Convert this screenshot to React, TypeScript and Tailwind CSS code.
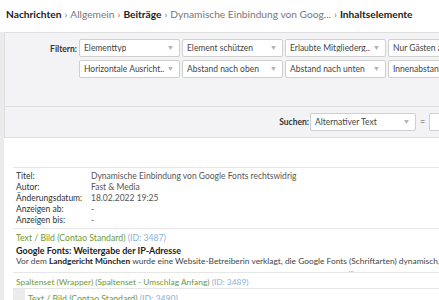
import React from "react";

const font = { fontFamily: 'Lato, "Open Sans", sans-serif' };

function Sel({ label, w = "w-[101px]" }: { label: string; w?: string }) {
  return (
    <div className={`${w} h-[18px] shrink-0 bg-white border border-[#cfcfcf] rounded-[2px] flex items-center justify-between pl-[4px] pr-[6px]`}>
      <span className="text-[8.5px] text-[#444] whitespace-nowrap overflow-hidden leading-none">{label}</span>
      <svg width="5" height="4" viewBox="0 0 6 5" className="shrink-0 ml-1">
        <path d="M0 0 H6 L3 5 Z" fill="#b5b5b5" />
      </svg>
    </div>
  );
}

export default function App() {
  return (
    <div className="w-[439px] h-[300px] overflow-hidden bg-white relative" style={font}>
      <div className="w-[560px]">
        <div className="h-[32px] flex items-center pl-[6px] pb-[2px] text-[10.2px] text-[#777] whitespace-nowrap">
          <span className="font-bold text-[#222]">Nachrichten</span>
          <span className="mx-[3px]">›</span>
          <span>Allgemein</span>
          <span className="mx-[3px]">›</span>
          <span className="font-bold text-[#222]">Beiträge</span>
          <span className="mx-[3px]">›</span>
          <span>Dynamische Einbindung von Goog...</span>
          <span className="mx-[3px]">›</span>
          <span className="font-bold text-[#222]">Inhaltselemente</span>
        </div>
        <div className="flex">
          <div className="w-[4px] bg-[#ebebeb] shrink-0" />
          <div className="flex-1">
            <div className="bg-[#f3f3f5] border-t border-l border-[#dedede] h-[74px] pt-[6px] flex">
              <div className="w-[73px] text-right pr-[1px] pt-[4px] text-[8.5px] font-bold text-[#333]">Filtern:</div>
              <div className="flex flex-col gap-[3px] pl-[1px]">
                <div className="flex gap-[2px]">
                  <Sel label="Elementtyp" />
                  <Sel label="Element schützen" />
                  <Sel label="Erlaubte Mitgliederg..." />
                  <Sel label="Nur Gästen anzeigen" />
                </div>
                <div className="flex gap-[2px]">
                  <Sel label="Horizontale Ausricht..." />
                  <Sel label="Abstand nach oben" />
                  <Sel label="Abstand nach unten" />
                  <Sel label="Innenabstand oben" />
                </div>
              </div>
            </div>
            <div className="bg-[#f3f3f5] border-t border-b border-l border-[#dedede] h-[32px] flex items-center">
              <div className="w-[305px] text-right pr-[1px] text-[8.5px] font-bold text-[#333]">Suchen:</div>
              <Sel label="Alternativer Text" w="w-[106px]" />
              <span className="text-[9px] text-[#555] mx-[4px]">=</span>
              <div className="w-[100px] h-[18px] bg-white border border-[#cfcfcf] rounded-[2px]" />
            </div>
            <div className="bg-white pt-[29px] pl-[9px]">
              <div className="border-t border-b border-[#e6e6e6] pt-[3px] pb-[2px] pl-[3px] text-[8.5px] leading-[11px] text-[#333]">
                <div className="grid grid-cols-[75px_1fr]">
                  <span>Titel:</span><span className="text-[#555]">Dynamische Einbindung von Google Fonts rechtswidrig</span>
                  <span>Autor:</span><span className="text-[#555]">Fast &amp; Media</span>
                  <span>Änderungsdatum:</span><span className="text-[#555]">18.02.2022 19:25</span>
                  <span>Anzeigen ab:</span><span className="text-[#555]">-</span>
                  <span>Anzeigen bis:</span><span className="text-[#555]">-</span>
                </div>
              </div>
              <div className="border-b border-[#e6e6e6] pt-[3px] pl-[3px]">
                <div className="text-[8.7px] leading-[12px] text-[#6f9a37]">Text / Bild (Contao Standard) <span className="text-[#8ab0d8]">(ID: 3487)</span></div>
                <div className="mt-[1px] text-[9px] leading-[11px] font-bold text-[#222]">Google Fonts: Weitergabe der IP-Adresse</div>
                <div className="text-[8.4px] leading-[11px] text-[#444] whitespace-nowrap">Vor dem <span className="font-bold text-[#222]">Landgericht München</span> wurde eine Website-Betreiberin verklagt, die Google Fonts (Schriftarten) dynamisch,</div>
                <div className="text-[7px] leading-[5px] h-[5px] text-[#999] pl-[333px]">...</div>
              </div>
              <div className="border-b border-[#e6e6e6] pt-[3px] pl-[3px]">
                <div className="text-[8.4px] leading-[12px] text-[#6f9a37]">Spaltenset (Wrapper) (Spaltenset - Umschlag Anfang) <span className="text-[#8ab0d8]">(ID: 3489)</span></div>
              </div>
              <div className="flex">
                <div className="w-[12px] h-[30px] bg-[#ebebeb]" />
                <div className="pl-[3px] pt-[4px] text-[8.7px] leading-[12px] text-[#6f9a37]">Text / Bild (Contao Standard) <span className="text-[#8ab0d8]">(ID: 3490)</span></div>
              </div>
            </div>
          </div>
        </div>
      </div>
    </div>
  );
}
